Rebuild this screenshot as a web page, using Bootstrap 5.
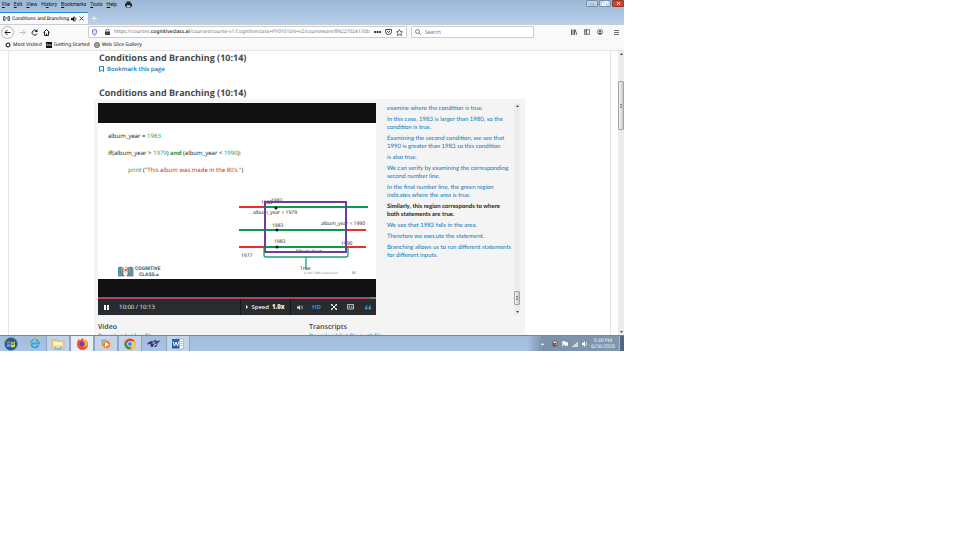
<!DOCTYPE html>
<html lang="en">
<head>
<meta charset="utf-8">
<meta name="viewport" content="width=device-width, initial-scale=1">
<title>Conditions and Branching</title>
<link href="https://cdn.jsdelivr.net/npm/bootstrap@5.3.0/dist/css/bootstrap.min.css" rel="stylesheet">
<style>
body{font-family:"Open Sans","Noto Sans",sans-serif;font-size:6px;line-height:8px;color:#3c3c3c;background:#fff;overflow:hidden;text-rendering:geometricPrecision}
svg{display:block;flex:none}
button,a.tool{border:0;background:none;padding:0;color:inherit;display:flex;align-items:center}
a{text-decoration:none;color:#0b78b5}
.desk{width:65vw;height:65vh}
.chrome-font{font-family:"Noto Sans","Open Sans",sans-serif;font-size:5px;color:#222}
.titlebar{background:linear-gradient(#9ab7d6,#b7cfe8);height:24px}
.menus{height:12px;padding:0 0 0 2px;gap:4px;line-height:8px}
.menus,.tabname{font-family:Roboto,"Open Sans",sans-serif;color:#111}
.menus button{height:8px}
.tabbtn{width:88px;height:12px;background:#f9f9fa;border-top:1px solid #2a8be8;padding:0 4px 0 3px;gap:2px}
.tabname{width:57px;white-space:nowrap;overflow:hidden}
.newtab{color:#eef5fc;font-size:10px;width:12px;justify-content:center}
.winbtns{gap:1px}
.winbtns button{width:12px;height:7px;border:1px solid #7590ad;border-radius:1px;background:#c3d3e4;color:#fff;justify-content:center}
.winbtns button.close-win{background:#cf4632;border-color:#8d3a30}
.navrow{height:15px;background:#f9f9fa;border-top:1px solid #c9ccd0}
.navbtns{width:88px;gap:5px;padding-left:1px}
.navbtns .backbtn{width:13px;height:13px;border:1px solid #b5b5b7;border-radius:50%;justify-content:center;background:#fff;flex:none}
.field{height:12px;border:1px solid #ccc;background:#fff;border-radius:1px;gap:4px;padding:0 3px}
.field input{border:0;outline:0;padding:0;background:none;color:#777;min-width:0;width:100%;font-size:5px;height:9px}
.urltext{color:#777;white-space:nowrap;overflow:hidden;min-width:0}
.urltext b{font-weight:500;color:#111}
.searchbox{width:123px;margin-left:4px}
.righticons{width:90px;padding-right:5px;gap:7px}
.marks{height:12px;background:#f9f9fa;border-bottom:1px solid #e4e4e4;padding:1px 5px 0;gap:4px}
.marks a{color:#111;gap:2px}
.view{min-height:0;overflow:hidden}
.sheet{margin-left:8px;margin-right:7px;border-left:1px solid #e4e4e4;border-right:1px solid #e4e4e4;padding:0 85px;overflow:hidden}
.sheet h1,.sheet h2{font-size:9px;line-height:13px;font-weight:700;margin:0 0 0 5px;color:#484848}
.bm{margin:1px 0 13px 5px;gap:3px;font-weight:600}
.unit{background:#f4f4f4;padding:4px 5px 0 4px;height:240px}
.player{width:278px;background:#111}
.letter{height:20px}
.letter.low{height:18px}
.slide{background:#fff;height:156px;position:relative}
.code{font-size:6px;line-height:9px;color:#111;padding:9px 10px 0}
.code div{margin-bottom:8px}
.code .ind{padding-left:20px}
.gr{color:#0a9556}.rd{color:#bd1d14}
.diagram{position:absolute;right:0;top:70px}
.logo-slide{position:absolute;left:20px;bottom:2px}
.prog{height:2px;background:#7b7b7b}
.prog div{height:2px;background:#b1416f}
.ctl{background:#282c2e;height:16px;color:#f0f0f0}
.ctl button{height:16px;justify-content:center;width:17px;flex:none}
.ctl .hd{color:#1f9be0;font-weight:700}
.ctl .spd{width:51px;border-left:1px solid #16191a;border-right:1px solid #16191a;gap:3px;font-weight:600}
.script{font-family:Lato,"Open Sans",sans-serif;padding-left:11px;overflow:hidden;height:212px;padding-top:2px}
.script p{margin:0 0 3px;white-space:nowrap}
.script p.now a{color:#222;font-weight:700}
.sbar{width:6px;background:#ececec;flex:none}
.thumb{background:linear-gradient(90deg,#f5f5f5,#c8c8cc);border:1px solid #a4a4a8;border-radius:1px;height:14px;width:6px}
.tall{height:49px}
.sbar svg{margin:2px auto}
.dl h3{font-size:7px;line-height:9px;font-weight:600;margin:0}
.taskbar{height:16px;background:linear-gradient(#a3bddb,#a9c3e0);border-top:1px solid #76879a}
.taskbar button{width:24px;height:15px;justify-content:center}
.taskbar button.orb{width:22px}
.taskbar .open{background:#c3d4e8;border:1px solid #8ea4bf;border-width:0 1px}
.taskbar .active{background:#e7edf5}
.tray{background:linear-gradient(90deg,#a6c0de,#7c91ac 16px,#8296ae);color:#fff;gap:4px;padding-left:14px}
.clock{font-size:5px;line-height:6px;width:24px;text-align:center;color:#fff}
.taskbar button.peek{width:5px;background:#51677f;border-left:1px solid #a9bccf}
</style>
<script src="https://cdn.jsdelivr.net/npm/bootstrap@5.3.0/dist/js/bootstrap.bundle.min.js"></script>
</head>
<body>
<div class="desk d-flex flex-column">
 <header class="chrome-font">
  <div class="titlebar d-flex flex-column">
   <div class="menus d-flex">
    <button><span><u>F</u>ile</span></button><button><span><u>E</u>dit</span></button><button><span><u>V</u>iew</span></button><button><span>Hi<u>s</u>tory</span></button><button><span><u>B</u>ookmarks</span></button><button><span><u>T</u>ools</span></button><button><span><u>H</u>elp</span></button>
    <button class="ms-1" aria-label="Print"><svg width="7" height="7" viewBox="0 0 14 14"><path d="M3 1h8v4H3zM0 5h14v6H0z" fill="#222"/><path d="M3 8h8v5H3z" fill="#b9cde2" stroke="#222"/></svg></button>
    <div class="winbtns d-flex ms-auto">
     <button aria-label="Minimize"><svg width="6" height="4"><path d="M1 2h4v1H1z" fill="#fff" stroke="#667" stroke-width=".4"/></svg></button>
     <button aria-label="Restore"><svg width="6" height="5"><path d="M2.500.500h3v2.500M.500 2h3v2.500h-3z" fill="none" stroke="#fff"/></svg></button>
     <button class="close-win" aria-label="Close"><svg width="5" height="5"><path d="M1 1l3 3M4 1l-3 3" stroke="#fff"/></svg></button>
    </div>
   </div>
   <div class="d-flex">
    <div class="tabbtn d-flex align-items-center">
     <svg width="7" height="5" viewBox="0 0 14 10"><path d="M1 1h3v8H1zM10 1h3v8h-3z" fill="none" stroke="#3a6f8f" stroke-width="2"/><circle cx="7" cy="4" r="2" fill="#e27b42"/></svg>
     <span class="tabname">Conditions and Branching (</span>
     <button aria-label="Mute tab"><svg width="6" height="6" viewBox="0 0 12 12"><path d="M0 4h3l4-4v12L3 8H0z" fill="#111"/><path d="M9 3q2 3 0 6" fill="none" stroke="#111" stroke-width="1.500"/></svg></button>
     <button aria-label="Close tab"><svg width="5" height="5"><path d="M.5.5l4 4M4.500.5l-4 4" stroke="#222" stroke-width=".8"/></svg></button>
    </div>
    <button class="newtab" aria-label="New tab">+</button>
   </div>
  </div>
  <div class="navrow d-flex align-items-center">
   <div class="navbtns d-flex align-items-center">
    <button class="backbtn" aria-label="Back"><svg width="7" height="7" viewBox="0 0 14 14"><path d="M13 7H2M7 2L2 7l5 5" fill="none" stroke="#222" stroke-width="2"/></svg></button>
    <button aria-label="Forward"><svg width="7" height="7" viewBox="0 0 14 14"><path d="M1 7h11M7 2l5 5-5 5" fill="none" stroke="#aaa" stroke-width="1.500"/></svg></button>
    <button aria-label="Reload"><svg width="7" height="7" viewBox="0 0 14 14"><path d="M11 4a5 5 0 1 0 1 5" fill="none" stroke="#222" stroke-width="2"/><path d="M13 0v6H7z" fill="#222"/></svg></button>
    <button aria-label="Home"><svg width="7" height="7" viewBox="0 0 14 14"><path d="M1 7l6-6 6 6M3 6v7h8V6M7 13V9" fill="none" stroke="#222" stroke-width="2"/></svg></button>
   </div>
   <div class="field d-flex align-items-center flex-grow-1 overflow-hidden">
    <svg width="5" height="7" viewBox="0 0 10 14"><path d="M5 1l4 1v5q0 4-4 6-4-2-4-6V2z" fill="#e0dcff" stroke="#6250d0" stroke-width="1.500"/></svg>
    <svg class="ms-1" width="5" height="6" viewBox="0 0 10 12"><path d="M0 5h10v7H0z" fill="#444"/><path d="M2 5V3a3 3 0 0 1 6 0v2" fill="none" stroke="#444" stroke-width="1.500"/></svg>
    <div class="urltext flex-grow-1">https://courses.<b>cognitiveclass.ai</b>/courses/course-v1:Cognitiveclass+PY0101EN+v2/courseware/89227024130b</div>
    <button aria-label="Page actions"><svg width="7" height="2"><circle cx="1" cy="1" r="1"/><circle cx="3.500" cy="1" r="1"/><circle cx="6" cy="1" r="1"/></svg></button>
    <button aria-label="Pocket"><svg width="7" height="6" viewBox="0 0 14 12"><path d="M1 1h12v4a6 6 0 0 1-12 0zM4 4l3 3 3-3" fill="none" stroke="#333" stroke-width="1.800"/></svg></button>
    <button aria-label="Bookmark"><svg width="7" height="7" viewBox="0 0 14 14"><path d="M7 1l2 4 4 .5-3 3 1 4.500-4-2-4 2 1-4.500-3-3L5 5z" fill="none" stroke="#333" stroke-width="1.500"/></svg></button>
   </div>
   <label class="field searchbox d-flex align-items-center">
    <svg width="6" height="6" viewBox="0 0 12 12"><circle cx="5" cy="5" r="4" fill="none" stroke="#444" stroke-width="1.300"/><path d="M8 8l4 4" stroke="#444" stroke-width="1.300"/></svg>
    <input type="text" placeholder="Search" aria-label="Search">
   </label>
   <div class="righticons d-flex align-items-center justify-content-end">
    <button aria-label="Library"><svg width="6" height="6" viewBox="0 0 12 12"><path d="M1 1v11M4 1v11M7 1v11M8 1l4 11" stroke="#333" stroke-width="1.600"/></svg></button>
    <button aria-label="Sidebar"><svg width="6" height="6" viewBox="0 0 12 12"><path d="M.7 1.500h10.600v9H.7zM5 1v10M2 4h2M2 6h2" fill="none" stroke="#333" stroke-width="1.400"/></svg></button>
    <button aria-label="Account"><svg width="6" height="6" viewBox="0 0 12 12"><circle cx="6" cy="6" r="5" fill="none" stroke="#333" stroke-width="1.300"/><circle cx="6" cy="5" r="2" fill="#333"/><path d="M3 10q3-5 6 0z" fill="#333"/></svg></button>
    <button class="ms-1" aria-label="Menu"><svg width="5" height="5" viewBox="0 0 10 10"><path d="M0 1h10M0 5h10M0 9h10" stroke="#333" stroke-width="1.400"/></svg></button>
   </div>
  </div>
  <nav class="marks d-flex align-items-center">
   <a class="tool" href="#"><svg width="6" height="6" viewBox="0 0 12 12"><circle cx="6" cy="6" r="3.500" fill="none" stroke="#333" stroke-width="1.800"/><path d="M6 0v3M6 9v3M0 6h3M9 6h3M2 2l2 2M8 8l2 2M10 2L8 4M4 8l-2 2" stroke="#333" stroke-width="1.500"/></svg>Most Visited</a>
   <a class="tool" href="#"><svg width="6" height="6"><path d="M0 0h6v6H0z" fill="#111"/><path d="M1 4V2h1v2M3 4V2l2 2V2" stroke="#ccc" stroke-width=".6" fill="none"/></svg>Getting Started</a>
   <a class="tool" href="#"><svg width="6" height="6" viewBox="0 0 12 12"><circle cx="6" cy="6" r="5" fill="#ddd" stroke="#333" stroke-width="1.400"/><path d="M1 6h10M6 1v10M3 2q3 4 0 8M9 2q-3 4 0 8" fill="none" stroke="#555" stroke-width=".8"/></svg>Web Slice Gallery</a>
  </nav>
 </header>

 <div class="view d-flex flex-grow-1">
  <main class="sheet flex-grow-1">
   <h1>Conditions and Branching (10:14)</h1>
   <a class="bm d-flex align-items-center" href="#"><svg width="5" height="6"><path d="M.5.500h4v5l-2-1.500-2 1.500z" fill="none" stroke="#0b78b5" stroke-width=".9"/></svg>Bookmark this page</a>
   <h2>Conditions and Branching (10:14)</h2>
   <section class="unit">
    <div class="d-flex">
     <div class="player flex-shrink-0">
      <div class="letter"></div>
      <div class="slide">
       <div class="code">
        <div>album_year = <span class="gr">1983</span></div>
        <div><b class="gr">if</b>(album_year &gt; <span class="gr">1979</span>) <b class="gr">and</b> (album_year &lt; <span class="gr">1990</span>):</div>
        <div class="ind"><span class="gr">print</span> (<span class="rd">"This album was made in the 80’s "</span>)</div>
       </div>
       <svg class="diagram" width="140" height="84" viewBox="0 0 140 84" font-family="Open Sans" font-size="5" fill="#111">
        <g stroke-width="2"><path d="M3 14h26M110 37h20M3 54h26M110 54h20" stroke="#ee2f27"/><path d="M29 14h103M3 37h107M29 54h81" stroke="#0a9a50"/></g>
        <text x="25" y="11">1980</text><text x="35" y="9">1983</text><text x="17" y="21">album_year &gt; 1979</text>
        <text x="36" y="34">1983</text><text x="85" y="32">album_year &lt; 1990</text>
        <text x="38" y="50">1983</text><text x="105" y="52">1990</text><text x="5" y="64">1977</text><text x="59" y="60">Album Year</text>
        <circle cx="40" cy="15" r="1.500"/><circle cx="41" cy="37" r="1.500"/><circle cx="41" cy="54" r="1.500"/>
        <path d="M29 9h81v50H29z" fill="none" stroke="#743b9c" stroke-width="2"/>
        <path d="M28 55v7q0 2 2 2h80q2 0 2-2v-7M70 64v12" fill="none" stroke="#18a568" stroke-width="1.300"/>
        <text x="64" y="77">True</text>
        <text x="68" y="81" font-size="3" fill="#777">© 2017 IBM Corporation</text><text x="116" y="81" font-size="4" fill="#555">M</text>
       </svg>
       <svg class="logo-slide" width="46" height="12" viewBox="0 0 46 12" font-family="Roboto" font-size="5" font-weight="700" fill="#285871">
        <path d="M0 3l2-1v7l4 1v1H0zM15 3l-2-1v7l-4 1v1h6zM2 2l3 1v6l-3-1M13 2l-3 1v6l3-1" fill="#7da6ba" stroke="#285871" stroke-width=".6"/>
        <path d="M4 3l7 4M11 3L5 7M8 1v8" stroke="#e26e3c" stroke-width=".6"/><circle cx="5" cy="3" r="1" fill="#e5ae32"/><circle cx="10" cy="3" r="1" fill="#4da66b"/><circle cx="8" cy="5" r="1" fill="#d94c60"/>
        <text x="17" y="5">COGNITIVE</text><text x="21" y="11">CLASS<tspan font-size="4">.ai</tspan></text>
       </svg>
      </div>
      <div class="letter low"></div>
      <div class="prog"><div style="width:98%"></div></div>
      <div class="ctl d-flex align-items-center">
       <button aria-label="Pause"><svg width="5" height="5"><path d="M0 0h2v5H0zM3 0h2v5H3z" fill="#fff"/></svg></button>
       <span class="ms-1 flex-grow-1">10:00 / 10:13</span>
       <button class="spd"><svg width="2" height="4"><path d="M0 0l2 2-2 2z" fill="#fff"/></svg><span>Speed</span><b>1.0x</b></button>
       <button aria-label="Volume"><svg width="6" height="5" viewBox="0 0 12 10"><path d="M0 3h3l3-3v10L3 7H0z" fill="#ddd"/><path d="M8 2q2 3 0 6M10 1q3 4 0 8" fill="none" stroke="#ddd"/></svg></button>
       <button class="hd">HD</button>
       <button aria-label="Fill screen"><svg width="6" height="6" viewBox="0 0 12 12"><path d="M1 1l10 10M11 1L1 11" stroke="#fff" stroke-width="2"/><path d="M0 0h4L0 4zM12 0v4L8 0zM0 12V8l4 4zM12 12H8l4-4z" fill="#fff"/></svg></button>
       <button aria-label="Captions"><svg width="7" height="6" viewBox="0 0 14 12"><path d="M1 1h12v9H1z" fill="none" stroke="#ddd" stroke-width="1.600"/><path d="M6 4H4v3h2M11 4H9v3h2" fill="none" stroke="#ddd" stroke-width="1.400"/></svg></button>
       <button aria-label="Transcript"><svg width="6" height="5" viewBox="0 0 12 10"><path d="M5 0Q0 1 0 6v3h5V4H2q1-2 3-2zM12 0Q7 1 7 6v3h5V4H9q1-2 3-2z" fill="#1f9be0"/></svg></button>
      </div>
     </div>
     <div class="script flex-grow-1">
      <p><a href="#">examine where the condition is true.</a></p>
      <p><a href="#">In this case, 1983 is larger than 1980, so the<br>condition is true.</a></p>
      <p><a href="#">Examining the second condition, we see that<br>1990 is greater than 1983 so this condition</a></p>
      <p><a href="#">is also true.</a></p>
      <p><a href="#">We can verify by examining the corresponding<br>second number line.</a></p>
      <p><a href="#">In the final number line, the green region<br>indicates where the area is true.</a></p>
      <p class="now"><a href="#">Similarly, this region corresponds to where<br>both statements are true.</a></p>
      <p><a href="#">We see that 1983 falls in the area.</a></p>
      <p><a href="#">Therefore we execute the statement.</a></p>
      <p><a href="#">Branching allows us to run different statements<br>for different inputs.</a></p>
     </div>
     <div class="sbar d-flex flex-column">
      <svg width="3" height="2"><path d="M0 2L1.500 0 3 2z" fill="#444"/></svg>
      <div class="thumb mt-auto mb-1 d-flex align-items-center"><svg width="2" height="4"><path d="M0 .5h2M0 2h2M0 3.500h2" stroke="#666" stroke-width=".7"/></svg></div>
      <svg width="3" height="2"><path d="M0 0h3L1.500 2z" fill="#444"/></svg>
     </div>
    </div>
    <div class="row g-0 dl pt-2">
     <div class="col-6"><h3>Video</h3><a href="#">Download video file</a></div>
     <div class="col-6"><h3>Transcripts</h3><a href="#">Download SubRip (.srt) file</a></div>
    </div>
   </section>
  </main>
  <div class="sbar d-flex flex-column">
   <svg width="3" height="2"><path d="M0 2L1.500 0 3 2z" fill="#444"/></svg>
   <div class="thumb tall mt-4 d-flex align-items-center"><svg width="2" height="4"><path d="M0 .5h2M0 2h2M0 3.500h2" stroke="#666" stroke-width=".7"/></svg></div>
   <svg class="mt-auto" width="3" height="2"><path d="M0 0h3L1.500 2z" fill="#444"/></svg>
  </div>
 </div>

 <footer class="taskbar d-flex align-items-center">
  <button class="orb" aria-label="Start"><svg width="14" height="14" viewBox="0 0 28 28"><circle cx="14" cy="14" r="13" fill="#235b8d" stroke="#6a9cc4"/><path d="M6 9q4-2 7 0v5q-3-2-7 0z" fill="#ea5b2e"/><path d="M14 9q4 2 8-1v5q-4 3-8 1z" fill="#8bc24a"/><path d="M6 15q4-2 7 0v5q-3-2-7 0z" fill="#4cb2ec"/><path d="M14 15q4 2 8-1v5q-4 3-8 1z" fill="#f7cd38"/></svg></button>
  <button aria-label="Internet Explorer"><svg width="13" height="13" viewBox="0 0 26 26"><path d="M21 17a8 8 0 1 1 1-4H7" fill="none" stroke="#36a3e3" stroke-width="4"/><path d="M3 23Q0 18 9 9T23 3q2 2-1 6" fill="none" stroke="#efc44b" stroke-width="2"/></svg></button>
  <button class="open" aria-label="File Explorer"><svg width="14" height="12" viewBox="0 0 28 24"><path d="M2 3h9l2 3h13v16H2z" fill="#f2d684" stroke="#c4a14c"/><path d="M5 8h18v7H5z" fill="#fff3c4"/><path d="M7 17h14v6H7z" fill="#77b9d9"/><path d="M10 14h8v6h-8z" fill="#f4df94"/></svg></button>
  <button class="open active" aria-label="Firefox"><svg width="13" height="13" viewBox="0 0 26 26"><path d="M3 8l3-4 2 3 5-5q1 4 5 5l2-1q4 4 4 9a11 11 0 0 1-22 0q0-4 1-7z" fill="#f4522d"/><path d="M14 2q3 3 6 6 4 3 3 8-3 5-9 4 6-6 1-11z" fill="#ffb52d"/><circle cx="12" cy="14" r="5" fill="#6a45b8"/></svg></button>
  <button class="open" aria-label="Media Player"><svg width="12" height="12" viewBox="0 0 24 24"><path d="M2 2h13v15H2z" fill="#75b4e3" stroke="#eaf4fb"/><circle cx="13" cy="13" r="8" fill="#ef7d22" stroke="#f5d3b0"/><path d="M10 8l8 5-8 5z" fill="#fff"/></svg></button>
  <button class="open" aria-label="Chrome"><svg width="12" height="12" viewBox="0 0 24 24"><circle cx="12" cy="12" r="11" fill="#e04437"/><path d="M2 7l7 7 3 9A11 11 0 0 1 2 7z" fill="#2ca253"/><path d="M12 7h10a11 11 0 0 1-10 16l5-9z" fill="#f8cc3b"/><circle cx="12" cy="12" r="5" fill="#4083e8" stroke="#fff" stroke-width="1.500"/></svg></button>
  <button aria-label="App"><svg width="14" height="11" viewBox="0 0 28 22"><path d="M1 10l7-4 5 1 3-4 3 3 8-1-6 6-6 1-4 6-4-1 1-5-7 1z" fill="#343c91"/><path d="M6 13l6 1-1 4zM14 17l8-6-4 7z" fill="#25297a"/><path d="M9 10l9-3-4 5z" fill="#c9b65c"/></svg></button>
  <button class="open" aria-label="Word"><svg width="12" height="12" viewBox="0 0 24 24"><path d="M8 2h15v20H8z" fill="#fff" stroke="#6b93c9"/><path d="M0 2h15v19H0z" fill="#285fac"/><path d="M2 7l3 9 3-8 3 8 3-9" fill="none" stroke="#fff" stroke-width="2"/><path d="M17 7h4M17 11h4M17 15h4" stroke="#285fac"/></svg></button>
  <div class="tray d-flex align-items-center ms-auto h-100">
   <svg width="3" height="2"><path d="M0 2L1.500 0 3 2z" fill="#fff"/></svg>
   <svg class="ms-1" width="6" height="7"><path d="M1 1h4v5H1z" fill="#ddd" stroke="#444" stroke-width=".6"/><path d="M1 3l3 3M4 3L1 6" stroke="#d41f1f" stroke-width="1.400"/></svg>
   <svg width="6" height="6"><path d="M.5 0v6M1 .5h2l1 1h2v3H3l-1-1H1z" fill="#fff" stroke="#fff" stroke-width=".6"/></svg>
   <svg width="6" height="6"><path d="M0 6l6-5v5z" fill="#c8d2dc" stroke="#fff" stroke-width=".5"/></svg>
   <svg width="5" height="6"><path d="M0 2h1l2-2v6L1 4H0z" fill="#fff"/><path d="M4 1q1 2 0 4" fill="none" stroke="#fff" stroke-width=".6"/></svg>
   <div class="clock">5:30 PM<br>6/26/2020</div>
   <button class="peek" aria-label="Show desktop"></button>
  </div>
 </footer>
</div>
</body>
</html>
